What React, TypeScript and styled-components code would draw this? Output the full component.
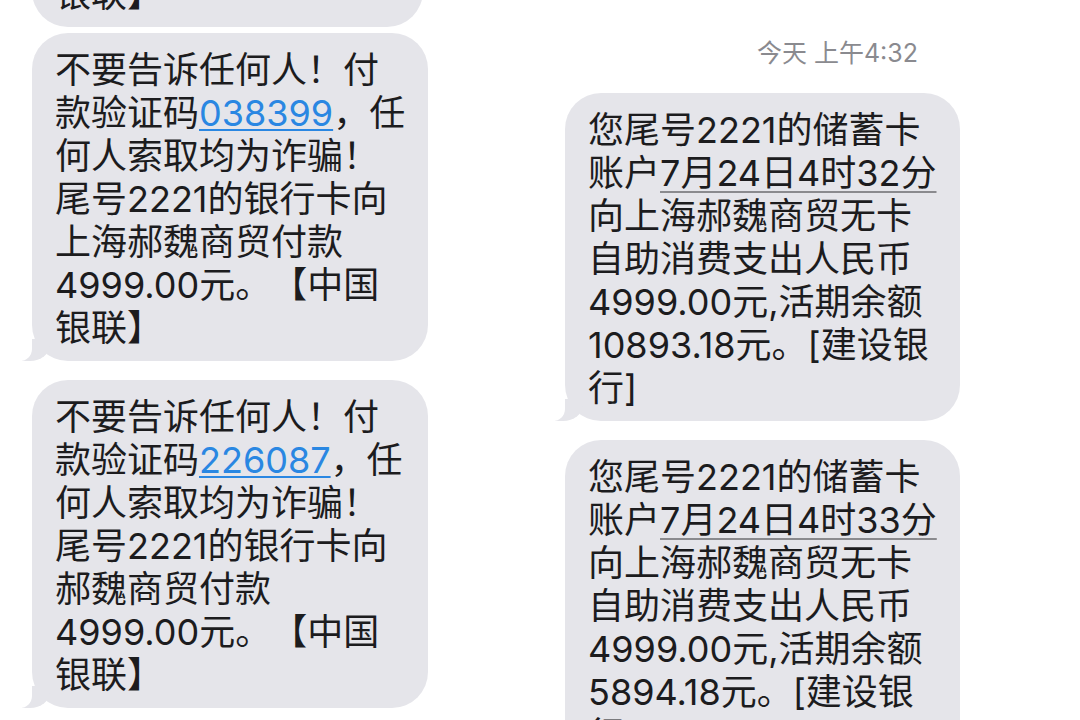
import React from "react";
import styled, { createGlobalStyle } from "styled-components";

const GlobalStyle = createGlobalStyle`
  html, body {
    margin: 0;
    padding: 0;
    background: #ffffff;
  }
  body {
    font-family: Inter, "Noto Sans CJK SC", sans-serif;
    color: #1c1c1e;
    text-spacing-trim: space-all;
  }
`;

const Page = styled.main`
  display: grid;
  grid-template-columns: 396px 395px;
  column-gap: 137px;
  align-items: start;
  padding-left: 32px;
  height: 720px;
  overflow: hidden;
`;

const Column = styled.section<{ $offset: number }>`
  display: flex;
  flex-direction: column;
  margin-top: ${(p) => p.$offset}px;
`;

const Stamp = styled.div`
  padding: 38px 42px 0 0;
  margin-bottom: 25px;
  text-align: right;
  font-size: 25px;
  line-height: 30px;
  color: #8a8a8f;
`;

const Bubble = styled.div<{ $width: number; $tail: boolean }>`
  position: relative;
  box-sizing: border-box;
  width: ${(p) => p.$width}px;
  padding: 16px 20px 11px 23px;
  margin-bottom: ${(p) => (p.$tail ? 19 : 6)}px;
  background: #e5e5ea;
  border-radius: 36px;
  font-size: 36px;
  line-height: 43px;

  ${(p) =>
    p.$tail &&
    `
    &::before {
      content: "";
      position: absolute;
      bottom: 0;
      left: -10px;
      height: 22px;
      border-right: 28px solid #e5e5ea;
      border-bottom-right-radius: 20px 16px;
    }
    &::after {
      content: "";
      position: absolute;
      bottom: 0;
      left: -30px;
      width: 30px;
      height: 22px;
      background: #ffffff;
      border-bottom-right-radius: 12px;
    }
  `}
`;

const Line = styled.span`
  display: block;
  white-space: nowrap;
`;

const Code = styled.span`
  color: #2a87e2;
  text-decoration: underline;
  text-decoration-thickness: 1.5px;
  text-underline-offset: 3px;
`;

const DateMark = styled.span`
  text-decoration: underline;
  text-decoration-color: #8a8a8e;
  text-decoration-thickness: 1.5px;
  text-underline-offset: 5px;
`;

type Msg = {
  lines: React.ReactNode[];
  width: number;
  tail?: boolean;
};

const leftMessages: Msg[] = [
  {
    width: 391,
    lines: [
      "不要告诉任何人！付",
      <>款验证码<Code>514620</Code>，任</>,
      "何人索取均为诈骗！",
      "尾号2221的银行卡向",
      "上海郝魏商贸付款",
      "4999.00元。【中国",
      "银联】",
    ],
  },
  {
    width: 396,
    tail: true,
    lines: [
      "不要告诉任何人！付",
      <>款验证码<Code>038399</Code>，任</>,
      "何人索取均为诈骗！",
      "尾号2221的银行卡向",
      "上海郝魏商贸付款",
      "4999.00元。【中国",
      "银联】",
    ],
  },
  {
    width: 396,
    tail: true,
    lines: [
      "不要告诉任何人！付",
      <>款验证码<Code>226087</Code>，任</>,
      "何人索取均为诈骗！",
      "尾号2221的银行卡向",
      "郝魏商贸付款",
      "4999.00元。【中国",
      "银联】",
    ],
  },
];

const rightMessages: Msg[] = [
  {
    width: 395,
    tail: true,
    lines: [
      "您尾号2221的储蓄卡",
      <>账户<DateMark>7月24日4时32分</DateMark></>,
      "向上海郝魏商贸无卡",
      "自助消费支出人民币",
      "4999.00元,活期余额",
      "10893.18元。[建设银",
      "行]",
    ],
  },
  {
    width: 395,
    tail: true,
    lines: [
      "您尾号2221的储蓄卡",
      <>账户<DateMark>7月24日4时33分</DateMark></>,
      "向上海郝魏商贸无卡",
      "自助消费支出人民币",
      "4999.00元,活期余额",
      "5894.18元。[建设银",
      "行]",
    ],
  },
];

function Thread({ messages }: { messages: Msg[] }) {
  return (
    <>
      {messages.map((m, i) => (
        <Bubble key={i} $width={m.width} $tail={!!m.tail}>
          {m.lines.map((l, j) => (
            <Line key={j}>{l}</Line>
          ))}
        </Bubble>
      ))}
    </>
  );
}

export default function App() {
  return (
    <>
      <GlobalStyle />
      <Page>
        <Column $offset={-301}>
          <Thread messages={leftMessages} />
        </Column>
        <Column $offset={0}>
          <Stamp>今天 上午4:32</Stamp>
          <Thread messages={rightMessages} />
        </Column>
      </Page>
    </>
  );
}
